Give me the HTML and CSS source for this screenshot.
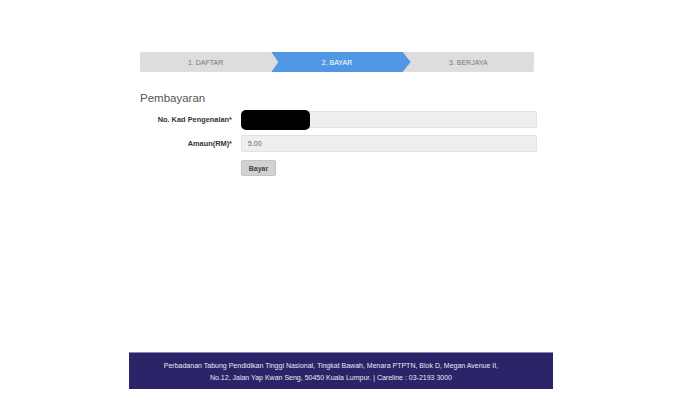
FILE: index.html
```html
<!DOCTYPE html>
<html>
<head>
<meta charset="utf-8">
<link rel="stylesheet" href="styles.css">
</head>
<body>
<div class="page">
  <div class="content">
    <div class="stepper">
      <div class="step">1. DAFTAR</div>
      <div class="step active"><span>2. BAYAR</span></div>
      <div class="step">3. BERJAYA</div>
    </div>
    <h1 class="title">Pembayaran</h1>
    <div class="form">
      <div class="row">
        <div class="label">No. Kad Pengenalan*</div>
        <div class="field"><span class="redact"></span></div>
      </div>
      <div class="row">
        <div class="label">Amaun(RM)*</div>
        <div class="field">5.00</div>
      </div>
      <div class="row">
        <div class="label"></div>
        <div class="actions"><button class="btn">Bayar</button></div>
      </div>
    </div>
  </div>
  <footer class="footer">
    Perbadanan Tabung Pendidikan Tinggi Nasional, Tingkat Bawah, Menara PTPTN, Blok D, Megan Avenue II,<br>
    No.12, Jalan Yap Kwan Seng, 50450 Kuala Lumpur. | Careline : 03-2193 3000
  </footer>
</div>
</body>
</html>
```

FILE: styles.css
```css
html, body {
  margin: 0;
  padding: 0;
  background: #ffffff;
  font-family: "Liberation Sans", Arial, sans-serif;
}
.page {
  width: 424px;
  margin-left: 129px;
  display: flex;
  flex-direction: column;
  height: 415px;
}
.content {
  padding: 52px 0 0 11px;
  flex: 1;
}
.stepper {
  width: 394px;
  height: 20px;
  background: #dddddd;
  border-radius: 2px;
  display: flex;
}
.step {
  flex: 1;
  position: relative;
  display: flex;
  align-items: center;
  justify-content: center;
  font-size: 7px;
  color: #7a7a7a;
}
.step.active {
  color: #ffffff;
}
.step.active::before {
  content: "";
  position: absolute;
  left: 0;
  top: 0;
  bottom: 0;
  right: -8px;
  background: #5198e4;
  clip-path: polygon(0 0, calc(100% - 8px) 0, 100% 50%, calc(100% - 8px) 100%, 0 100%, 7px 50%);
}
.step.active span {
  position: relative;
}
.title {
  margin: 20px 0 6px 0;
  font-size: 11.5px;
  line-height: 13px;
  font-weight: normal;
  color: #555555;
}
.form {
  display: flex;
  flex-direction: column;
  gap: 7px;
}
.row {
  display: flex;
  align-items: center;
}
.label {
  flex: none;
  width: 92px;
  padding-right: 9px;
  text-align: right;
  font-size: 7.4px;
  font-weight: bold;
  color: #333333;
}
.field {
  flex: none;
  position: relative;
  width: 288px;
  height: 15px;
  border: 1px solid #e2e2e2;
  border-radius: 2px;
  background: #eeeeee;
  font-size: 7px;
  color: #666666;
  display: flex;
  align-items: center;
  padding-left: 6px;
}
.redact {
  position: absolute;
  left: -1px;
  top: -2px;
  width: 69px;
  height: 20px;
  background: #000000;
  border-radius: 5px;
}
.actions {
  display: flex;
  padding-top: 1px;
}
.btn {
  width: 35px;
  height: 16px;
  padding: 0;
  border: 1px solid #c4c4c4;
  border-radius: 2px;
  background: #d2d2d2;
  font-family: "Liberation Sans", Arial, sans-serif;
  font-size: 7px;
  font-weight: bold;
  color: #444444;
}
.footer {
  margin-bottom: 26px;
  height: 37px;
  box-sizing: border-box;
  border-top: 1px solid #8c88b4;
  background: #2b2468;
  color: #e8e8f2;
  font-size: 7px;
  line-height: 11.5px;
  text-align: center;
  padding: 7px 20px 0 0;
}
```
